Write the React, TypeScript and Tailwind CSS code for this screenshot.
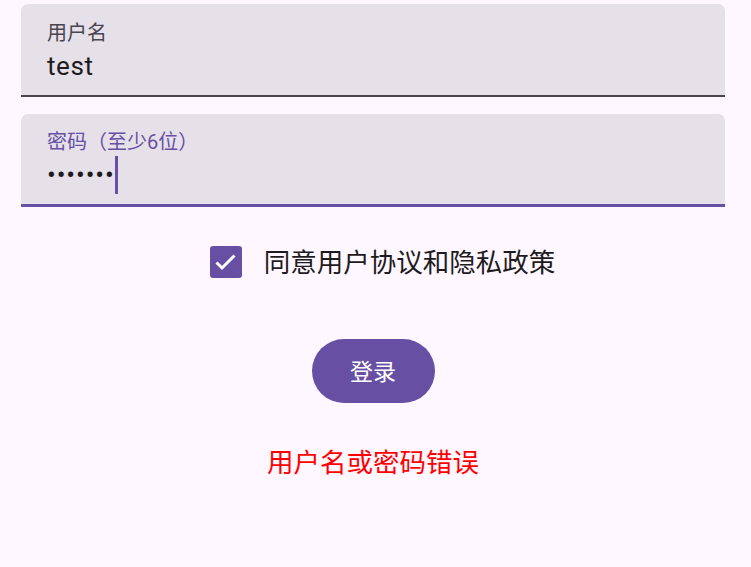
import React from 'react';

const font = "font-['Roboto','Noto_Sans_CJK_SC',sans-serif]";

const App: React.FC = () => {
    return (
        <div className={`min-h-screen w-full bg-[#FEF7FF] ${font}`}>
            <div className="flex flex-col pl-[21px] pr-[26px] pt-[4px] w-[751px]">
                {/* 用户名 */}
                <div className="h-[93px] rounded-t-[7px] bg-[#E6E0E9] border-b-2 border-[#49454F] px-[26px] pt-[17px]">
                    <div className="text-[20px] leading-[24px] text-[#49454F]">用户名</div>
                    <div className="mt-[2px] h-[38px] text-[26px] leading-[38px] tracking-[0.6px] text-[#1D1B20]">test</div>
                </div>

                {/* 密码 (focused) */}
                <div className="mt-[17px] h-[93px] rounded-t-[7px] bg-[#E6E0E9] border-b-[3px] border-[#6750A4] px-[26px] pt-[16px]">
                    <div className="text-[20px] leading-[24px] text-[#6750A4]">密码（至少6位）</div>
                    <div className="mt-[2px] flex items-center h-[38px]">
                        <span className="text-[26px] leading-[38px] tracking-[0.9px] text-[#1D1B20]">•••••••</span>
                        <span className="w-[3px] h-[38px] bg-[#6750A4]"></span>
                    </div>
                </div>

                {/* 协议 */}
                <div className="mt-[39px] flex items-center justify-center pl-[19px] h-[32px]">
                    <div className="w-[32px] h-[32px] rounded-[3px] bg-[#6750A4] flex items-center justify-center">
                        <svg width="32" height="32" viewBox="0 0 32 32">
                            <polyline points="6.5,16.5 12,22 24.5,9.5" fill="none" stroke="#fff" strokeWidth="3" />
                        </svg>
                    </div>
                    <span className="ml-[22px] pt-[2px] text-[26.5px] leading-[32px] text-[#1D1B20]">同意用户协议和隐私政策</span>
                </div>

                {/* 登录 */}
                <div className="mt-[61px] flex justify-center">
                    <button className="w-[123px] h-[64px] pt-[4px] rounded-full bg-[#6750A4] text-white text-[23px] font-normal">
                        登录
                    </button>
                </div>

                {/* 错误 */}
                <div className="mt-[44px] flex justify-center">
                    <span className="text-[26.5px] leading-[32px] text-[#FF0000]">用户名或密码错误</span>
                </div>
            </div>
        </div>
    );
};

export default App;
